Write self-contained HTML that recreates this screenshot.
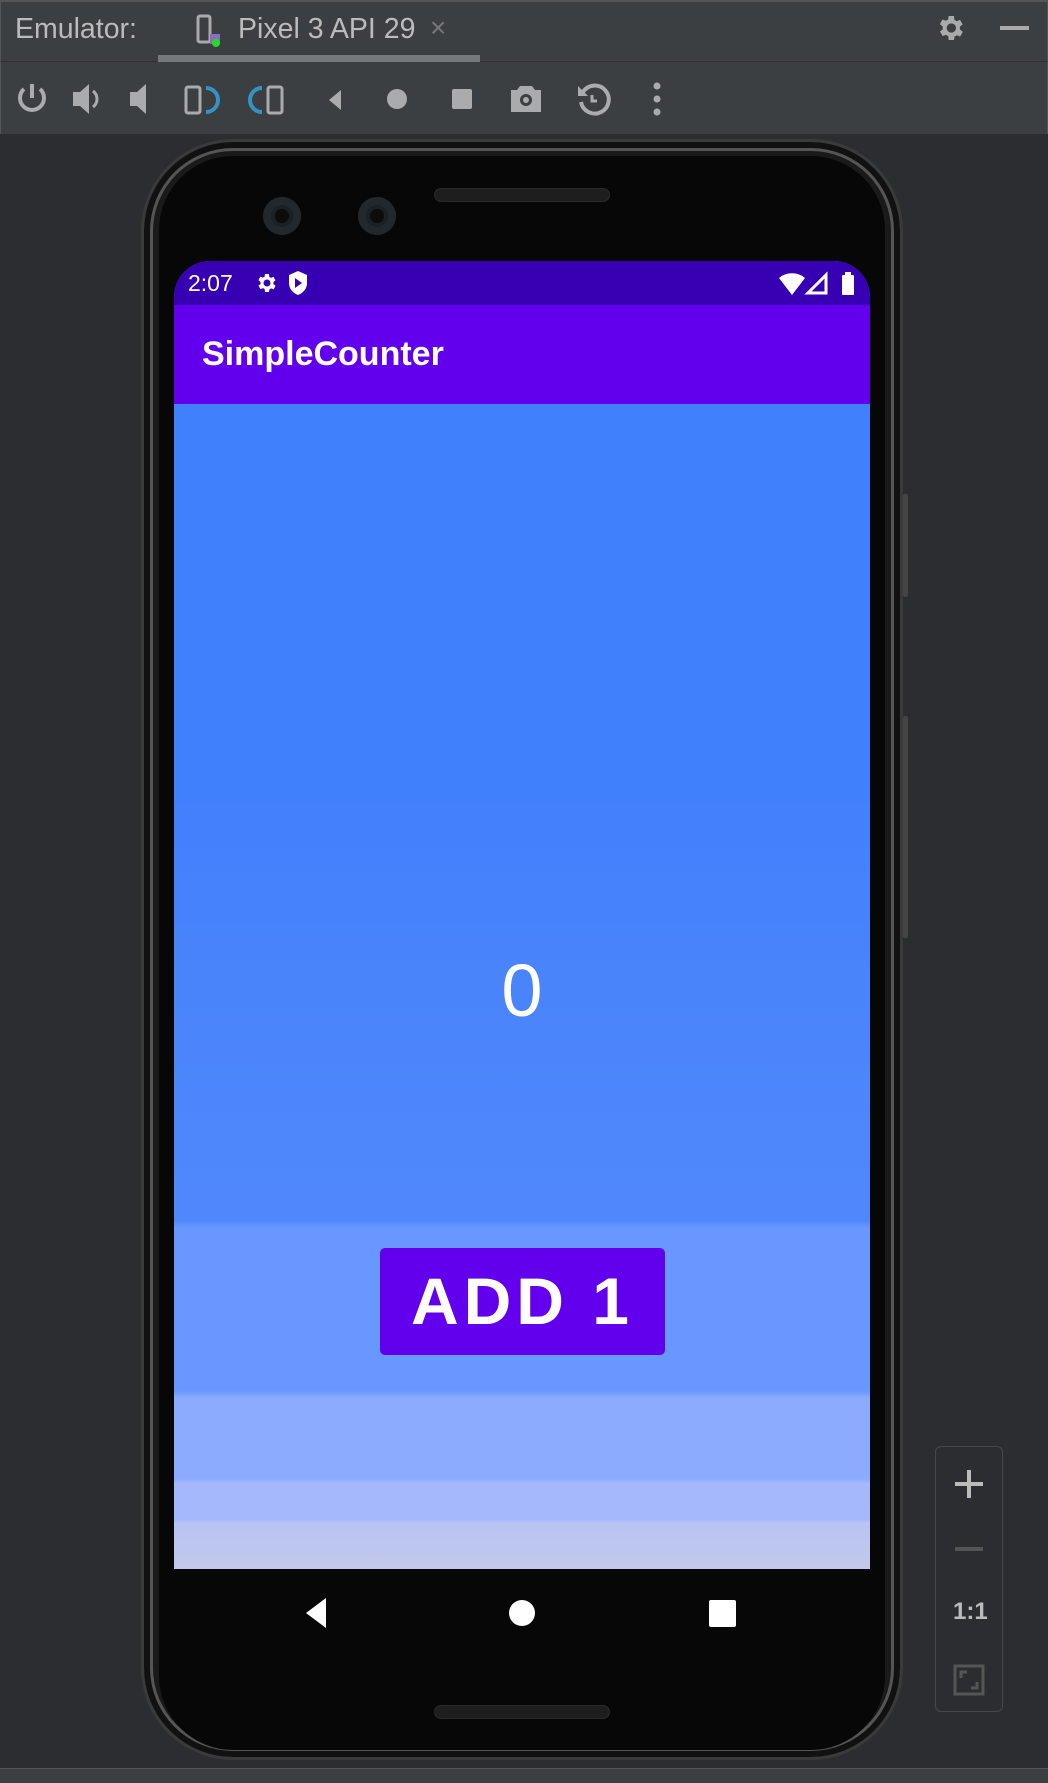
<!DOCTYPE html>
<html><head><meta charset="utf-8"><style>
*{margin:0;padding:0;box-sizing:border-box}
body{width:1048px;height:1783px;background:#2b2d30;position:relative;overflow:hidden;font-family:"Liberation Sans",sans-serif}
.abs{position:absolute}
#tabs{left:0;top:0;width:1048px;height:62px;background:#3c3f41;border-top:2px solid #555;border-left:1px solid #555;border-right:1px solid #555;border-bottom:1px solid #323232}
#tool{left:0;top:62px;width:1048px;height:72px;background:#3c3f41;border-left:1px solid #555;border-right:1px solid #555}
.t{color:#bbbbbb;font-size:28.5px}
#phone{left:141px;top:139px;width:762px;height:1621px;border-radius:92px;background:#1a1a1a;border:3px solid #3a3a3a;box-shadow:inset 0 0 0 6px #111,inset 0 0 0 9px #555}
#inner{left:159px;top:156px;width:726px;height:1594px;border-radius:74px;background:#070707}
#screen{left:174px;top:261px;width:696px;height:1308px;border-radius:36px 36px 0 0;overflow:hidden;
background:linear-gradient(#4180fc 0,#4180fc 535px,#4a84fb 728px,#5088fc 960px,#6898ff 967px,#6898ff 1130px,#8cabff 1137px,#8cabff 1218px,#a6b8fc 1222px,#a6b8fc 1258px,#b8c4f4 1262px,#c4c8ea 1308px)}
.cam{width:38px;height:38px;border-radius:50%;background:#1b2024;box-shadow:inset 0 0 0 8px #22282c}
.cam::after{content:"";position:absolute;left:12px;top:12px;width:14px;height:14px;border-radius:50%;background:#0c0c0c}
.spk{width:176px;height:14px;border-radius:7px;background:#1e1e1e;border:1px solid #2a2a2a}
</style></head><body>
<div id="tabs" class="abs"></div>
<div class="abs t" style="left:15px;top:13px">Emulator:</div>
<svg class="abs" style="left:196px;top:14px" width="34" height="36" viewBox="0 0 34 36"><rect x="2" y="2" width="12" height="26" rx="2" fill="none" stroke="#aaa" stroke-width="3"/><rect x="14" y="20" width="10" height="10" fill="#8a6fbf"/><circle cx="20" cy="29" r="4" fill="#22dd22"/></svg>
<div class="abs t" style="left:238px;top:13px">Pixel 3 API 29</div>
<div class="abs" style="left:430px;top:12px;color:#777;font-size:28px">×</div>
<div class="abs" style="left:158px;top:55px;width:322px;height:7px;background:#75787c"></div>
<svg class="abs" style="left:934px;top:12px" width="32" height="32" viewBox="0 0 24 24"><path fill="#aaa" d="M19.4 13a7.5 7.5 0 000-2l2.1-1.6-2-3.5-2.5 1a7 7 0 00-1.7-1L15 3h-4l-.4 2.6a7 7 0 00-1.7 1l-2.5-1-2 3.5L6.6 11a7.5 7.5 0 000 2l-2.1 1.6 2 3.5 2.5-1a7 7 0 001.7 1L11 21h4l.4-2.6a7 7 0 001.7-1l2.5 1 2-3.5zM13 15.5a3.5 3.5 0 110-7 3.5 3.5 0 010 7z"/></svg>
<div class="abs" style="left:1000px;top:26px;width:29px;height:4px;background:#aaa"></div>
<div id="tool" class="abs"></div>
<svg class="abs" style="left:0;top:78px" width="700" height="42" viewBox="0 0 700 42" fill="#a9abad">
<path d="M32 6v14" stroke="#a9abad" stroke-width="4"/><path d="M24 11a12 12 0 1016 0" fill="none" stroke="#a9abad" stroke-width="4"/>
<path d="M73 14h7l9-8v30l-9-8h-7z"/><path d="M93 13a10 10 0 010 16" fill="none" stroke="#a9abad" stroke-width="3"/>
<path d="M130 14h7l9-8v30l-9-8h-7z"/>
<rect x="186" y="9" width="14" height="26" rx="2" fill="none" stroke="#a9abad" stroke-width="3"/><path d="M206 10a12 12 0 010 24" fill="none" stroke="#3592c4" stroke-width="4"/>
<path d="M262 10a12 12 0 000 24" fill="none" stroke="#3592c4" stroke-width="4"/><rect x="268" y="9" width="14" height="26" rx="2" fill="none" stroke="#a9abad" stroke-width="3"/>
<path d="M341 12v20l-12-10z"/>
<circle cx="397" cy="21" r="10"/>
<rect x="452" y="11" width="20" height="20" rx="2"/>
<path d="M511 12h6l3-4h12l3 4h6v22h-30z"/><circle cx="526" cy="22" r="6" fill="#3c3f41"/><circle cx="526" cy="22" r="3"/>
<path d="M583 14a14 14 0 11-2 10" fill="none" stroke="#a9abad" stroke-width="4"/><path d="M578 8v10h10z"/><path d="M592 17v6h5" fill="none" stroke="#a9abad" stroke-width="3"/>
<circle cx="657" cy="8" r="3.5"/><circle cx="657" cy="21" r="3.5"/><circle cx="657" cy="34" r="3.5"/>
</svg>
<div id="phone" class="abs"></div>
<div class="abs" style="left:903px;top:494px;width:5px;height:103px;background:#444;border-radius:2px"></div>
<div class="abs" style="left:903px;top:716px;width:5px;height:222px;background:#444;border-radius:2px"></div>
<div id="inner" class="abs"></div>
<div class="abs cam" style="left:263px;top:197px"></div>
<div class="abs cam" style="left:358px;top:197px"></div>
<div class="abs spk" style="left:434px;top:188px"></div>
<div class="abs spk" style="left:434px;top:1705px"></div>
<div id="screen" class="abs">
<div class="abs" style="left:0;top:0;width:696px;height:44px;background:#3700b3"></div>
<div class="abs" style="left:14px;top:9px;color:#fff;font-size:23px">2:07</div>
<svg class="abs" style="left:80px;top:10px" width="24" height="24" viewBox="0 0 24 24"><path fill="#fff" d="M19.4 13a7.5 7.5 0 000-2l2.1-1.6-2-3.5-2.5 1a7 7 0 00-1.7-1L15 3h-4l-.4 2.6a7 7 0 00-1.7 1l-2.5-1-2 3.5L6.6 11a7.5 7.5 0 000 2l-2.1 1.6 2 3.5 2.5-1a7 7 0 001.7 1L11 21h4l.4-2.6a7 7 0 001.7-1l2.5 1 2-3.5zM13 15.5a3.5 3.5 0 110-7 3.5 3.5 0 010 7z"/></svg>
<svg class="abs" style="left:113px;top:9px" width="22" height="26" viewBox="0 0 22 26"><path fill="#fff" d="M11 1l9 4v8c0 6-4 10-9 12C6 23 2 19 2 13V5z"/><path fill="#3700b3" d="M8 8l7 5-7 5z"/></svg>
<svg class="abs" style="left:604px;top:10px" width="80" height="26" viewBox="0 0 80 26"><path fill="#fff" d="M1 7a20 20 0 0126 0L14 24z"/><path fill="none" stroke="#fff" stroke-width="3" d="M48 4v18H30z"/><rect x="64" y="4" width="12" height="20" rx="1" fill="#fff"/><rect x="67" y="1" width="6" height="4" fill="#fff"/></svg>
<div class="abs" style="left:0;top:44px;width:696px;height:99px;background:#6200ee"></div>
<div class="abs" style="left:28px;top:74px;color:#fff;font-size:34px;font-weight:bold;letter-spacing:0px">SimpleCounter</div>
<div class="abs" style="left:0;top:690px;width:696px;text-align:center;color:#fff;font-size:74px;line-height:80px">0</div>
<div class="abs" style="left:206px;top:987px;width:285px;height:107px;background:#6200ee;border-radius:5px;color:#fff;font-size:66px;line-height:107px;text-align:center;letter-spacing:5px;font-weight:bold">ADD 1</div>
</div>
<svg class="abs" style="left:300px;top:1596px" width="440" height="34" viewBox="0 0 440 34"><path fill="#fff" d="M26 2v30L6 17z"/><circle cx="222" cy="17" r="13" fill="#fff"/><rect x="409" y="4" width="27" height="27" rx="2" fill="#fff"/></svg>
<div class="abs" style="left:935px;top:1446px;width:68px;height:266px;border:1px solid #45474a;border-radius:6px;background:#2b2d30"></div>
<div class="abs" style="left:955px;top:1482px;width:28px;height:4px;background:#bbb"></div>
<div class="abs" style="left:967px;top:1470px;width:4px;height:28px;background:#bbb"></div>
<div class="abs" style="left:955px;top:1547px;width:28px;height:4px;background:#555"></div>
<div class="abs" style="left:953px;top:1598px;color:#bbb;font-size:24px;font-weight:bold">1:1</div>
<svg class="abs" style="left:953px;top:1664px" width="32" height="32" viewBox="0 0 32 32"><rect x="2" y="2" width="28" height="28" fill="none" stroke="#555" stroke-width="3"/><path d="M8 14V8h6M24 18v6h-6" fill="none" stroke="#555" stroke-width="3"/></svg>
<div class="abs" style="left:0;top:1768px;width:1048px;height:15px;background:#3c3f41;border-top:1px solid #555"></div>
</body></html>
